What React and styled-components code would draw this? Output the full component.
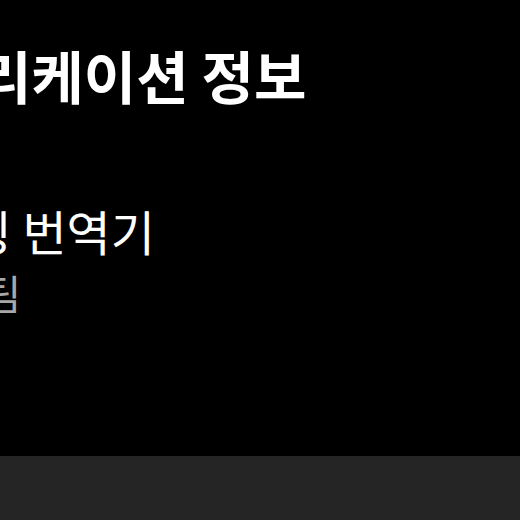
import styled, { createGlobalStyle } from "styled-components";

const GlobalStyle = createGlobalStyle`
  html, body {
    margin: 0;
    padding: 0;
    background: #000;
  }
  body {
    font-family: "Noto Sans CJK KR", "Noto Sans", sans-serif;
  }
`;

function App() {
  return (
    <>
      <GlobalStyle />
      <Screen>
        <Content>
          <Title>애플리케이션 정보</Title>
          <AppName>스트리밍 번역기</AppName>
          <Maker>개발팀</Maker>
        </Content>
        <BottomBar />
      </Screen>
    </>
  );
}
export default App;

const Screen = styled.div`
  width: 520px;
  height: 520px;
  overflow: hidden;
  display: flex;
  flex-direction: column;
  background: #000;
`;

const Content = styled.div`
  flex: 1;
  display: flex;
  flex-direction: column;
  padding-top: 35px;
  white-space: nowrap;
`;

/* the screen is a crop, so the text starts left of the visible edge */
const Title = styled.h1`
  margin: 0 0 0 -126px;
  font-size: 57px;
  font-weight: 700;
  line-height: 1.4;
  color: #fff;
`;

const AppName = styled.div`
  margin: 82px 0 0 -165px;
  font-size: 48px;
  font-weight: 400;
  line-height: 1.4;
  color: #fff;
`;

const Maker = styled.div`
  margin: 0 0 0 -92px;
  font-size: 41px;
  line-height: 1.4;
  color: #a8a8a8;
`;

const BottomBar = styled.div`
  height: 64px;
  background: #252525;
`;
